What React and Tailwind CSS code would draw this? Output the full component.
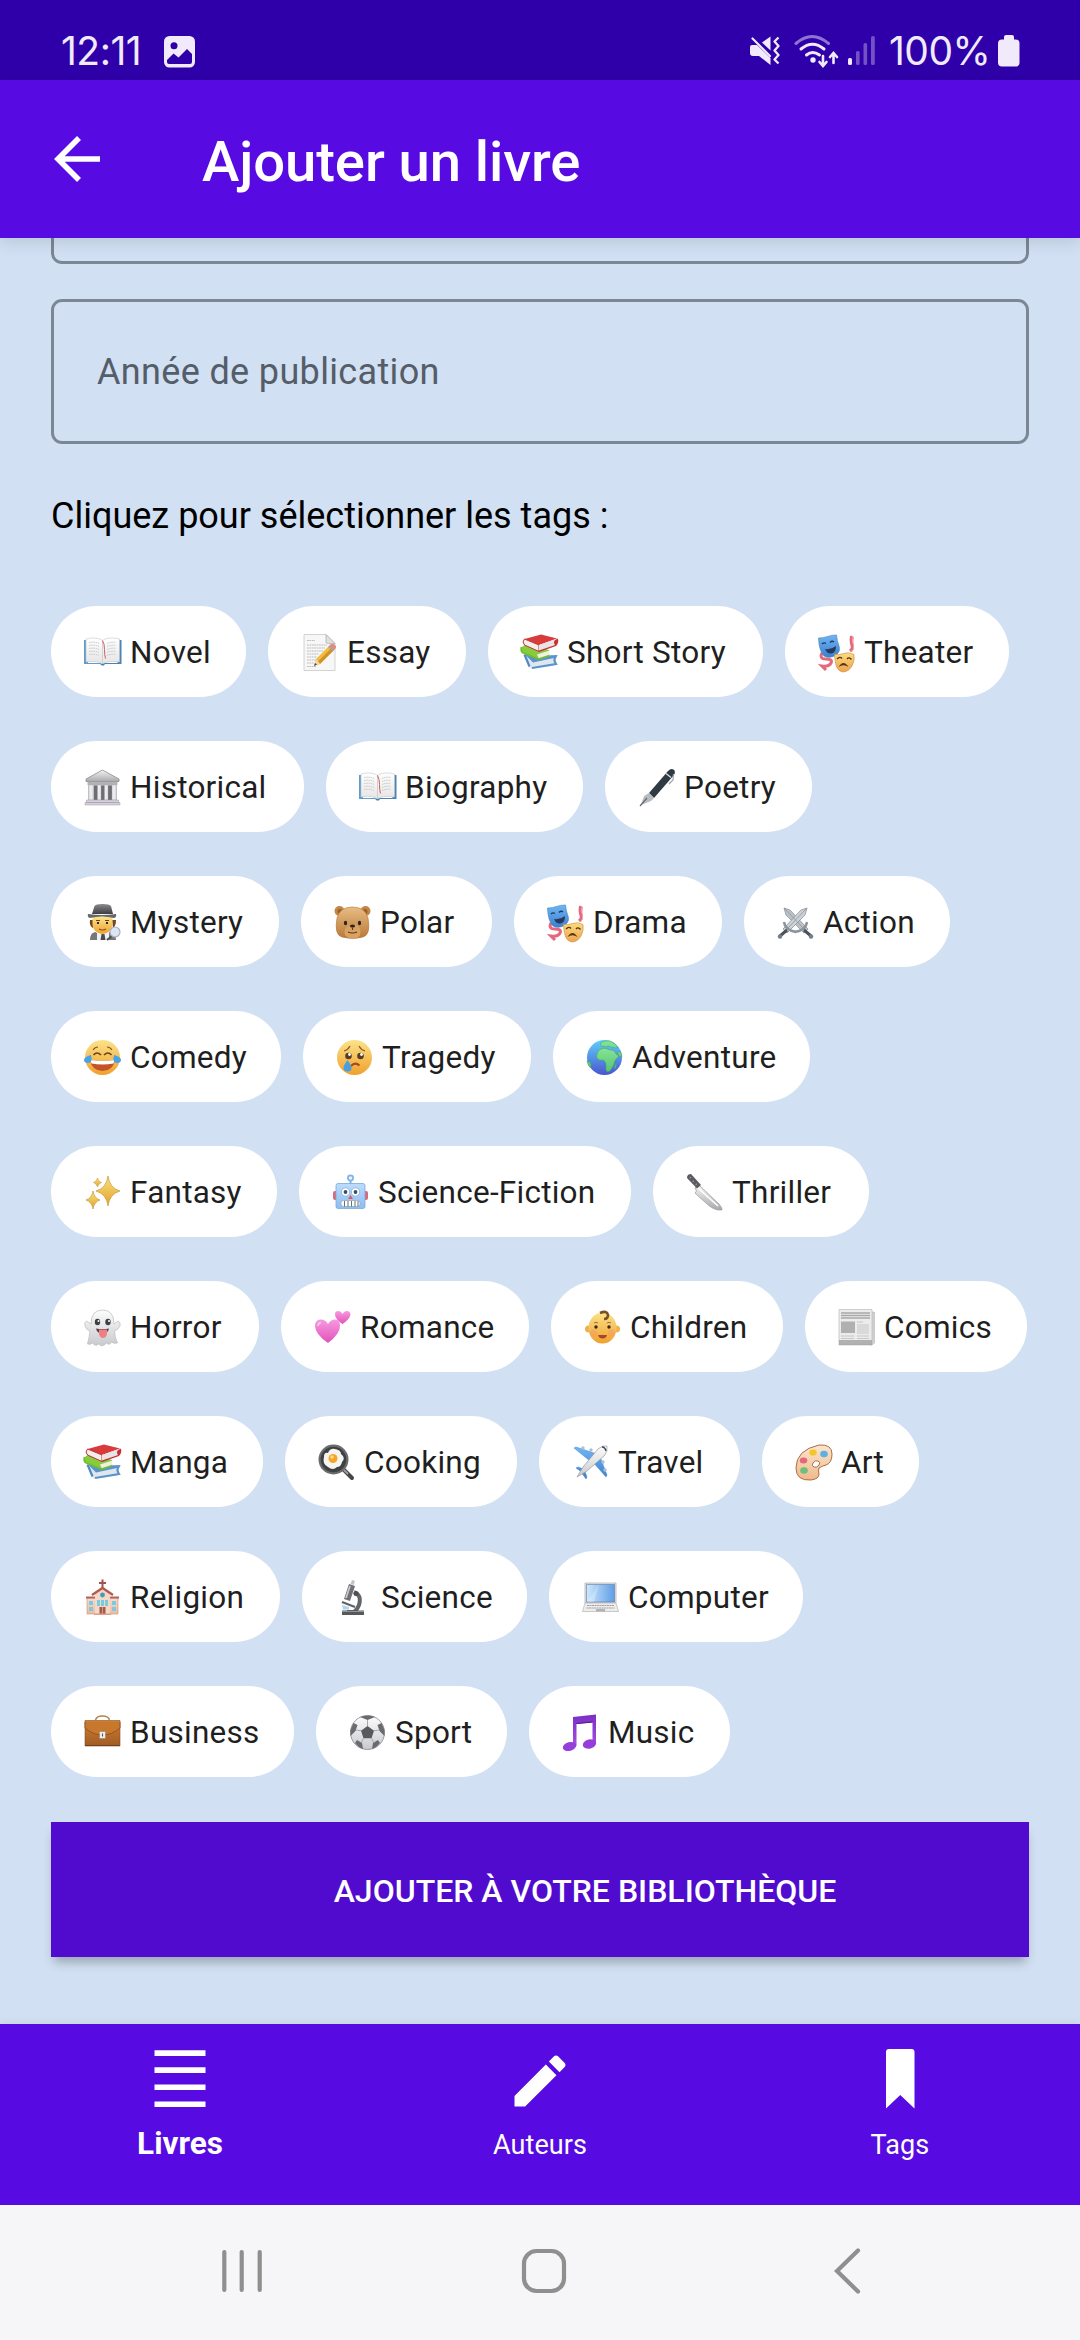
import React from "react";

/* Shared colour ramps used by the tag pictograms */
function Ramps() {
  const ramp = (id, a, b, horizontal) => (
    <linearGradient id={id} x1="0" y1="0" x2={horizontal ? "1" : "0"} y2={horizontal ? "0" : "1"}>
      <stop offset="0" stopColor={a} />
      <stop offset="1" stopColor={b} />
    </linearGradient>
  );
  return (
    <svg className="absolute h-0 w-0" aria-hidden="true">
      <defs>
        {ramp("face", "#fbe38a", "#f0a02c")}
        {ramp("grey", "#f4f4f4", "#a9a9ad")}
        {ramp("dark", "#8b8b8d", "#3e3e42")}
        {ramp("page", "#ffffff", "#e6e4e4")}
        {ramp("tan", "#e9bd83", "#b97838")}
        {ramp("brown", "#cf812f", "#a15a24")}
        {ramp("robot", "#bcdcfb", "#8dbdf3")}
        {ramp("ghost", "#fdfdfd", "#c9cacd")}
        {ramp("pink", "#f79ae0", "#e152bb")}
        {ramp("purple", "#7a2fc4", "#a64ee6")}
        {ramp("blue", "#6fb6f3", "#3d7fd0")}
        {ramp("sea", "#5fd0fa", "#4a55cf")}
        {ramp("land", "#83e594", "#58c274")}
        {ramp("screen", "#cfe8fb", "#5f9ee6", true)}
        {ramp("gold", "#fbe27a", "#e0a030")}
        {ramp("mask", "#fbdc7a", "#eda550")}
        {ramp("skin", "#fbe6cc", "#efb98c")}
        {ramp("wall", "#f6dccb", "#eebba3")}
      </defs>
    </svg>
  );
}

const OpenBook = () => (
  <>
    <path d="M1 7h4v23h14l1 2h-2l-1-1H1z" fill="#5f9ccb" />
    <path d="M38.500 7h-4v23H20l-1 2h2l1-1h16.500z" fill="#4a83b4" />
    <path d="M3 6c6-1.600 13-1.400 16.500 1.500V31C15 28 9 28 3 29z" fill="url(#page)" stroke="#c4c4c6" strokeWidth=".6" />
    <path d="M36.500 6c-6-1.600-13.500-1.400-17 1.500V31c4.500-3 11-3 17-2z" fill="url(#page)" stroke="#c4c4c6" strokeWidth=".6" />
    <path d="M6 9.500q6-1 10 1M6 12.500q6-1 10 1M6 15.500q6-1 10 1M6 18.500q6-1 10 1M6 21.500q6-1 10 1M24 10.500q5-2 9-1M24 13.500q5-2 9-1M24 16.500q5-2 9-1M24 19.500q5-2 9-1M24 22.500q5-2 9-1" fill="none" stroke="#bdbdbf" strokeWidth=".8" strokeDasharray="1.500 .7" />
    <path d="M19.500 7.500q2 3 2 9t1 9" fill="none" stroke="#c9605f" strokeWidth="1" />
    <path d="M18 30.500q1.500 1.500 3.500 0l-.5 2h-2.500z" fill="#3f7fb6" />
  </>
);

const Memo = () => (
  <>
    <path d="M4 1.500h22l9 9v27H4z" fill="#f7f7f7" stroke="#c9c9c9" strokeWidth=".8" />
    <path d="M26 1.500v8q0 1.500 9 1z" fill="#dfe0e1" stroke="#a9a9ab" strokeWidth=".7" />
    <path d="M7 7.500h8M7 12h20M7 15h18M7 18h16M7 21h12M7 24h10M7 27h9M7 30h7M7 33.500h9" stroke="#b5b5b5" strokeWidth=".9" strokeDasharray="1.800 .6" />
    <path d="M14 33l2-7L29 13l5 4-14 14z" fill="#f2bd3e" />
    <path d="M18 28.500L31.500 15l2.500 2-14 14z" fill="#d1922a" />
    <path d="M29 13l2-2q2-1 4 1t.5 3.500L34 17z" fill="#e28b86" />
    <path d="M28 14l1.500-1.500 5 4L33 18z" fill="#a4a4a8" />
    <path d="M14 33l2-7 4 5z" fill="#f1d6ae" />
    <path d="M14 33l1-3 2 1.500z" fill="#444" />
  </>
);

const Books = () => (
  <>
    <path d="M4 22l5 12q1 2 3 1.700l23-3.200V22z" fill="#dfe6ef" />
    <path d="M4.500 21.500l5 12" stroke="#4f8ac4" strokeWidth="2.200" />
    <path d="M5 21.500l8 8 21-4.500q3.500-1 3.500-3l-20 1z" fill="#5b93cb" />
    <path d="M36 23.500q-3 3 0 7.500l-24 4" fill="none" stroke="#5b93cb" strokeWidth="2.200" />
    <path d="M2 14l4-3 23 6q2 5-10 9Q2 20 1.500 18z" fill="#86cc3c" />
    <path d="M17 21.500l12.500-4q-1.500 3 .5 4.500l-11 4z" fill="#eef1e4" />
    <path d="M1.500 14q-1 5 2 6l15 6 11-3.500" fill="none" stroke="#72bd30" strokeWidth="1.800" />
    <path d="M4.500 6L21 1.500 37 5.500 19 12z" fill="#d93a3c" />
    <path d="M4.500 6q-3 3 0 6l14.500 6.500V12z" fill="#f3eeee" stroke="#c13033" strokeWidth="1" />
    <path d="M19 12l17-6v5.500L19 18z" fill="#e8e4e4" />
    <path d="M38 5.500l-3 1.500q-2 2.500 0 5L19 17.500v1.600L36 13q3-3 2-7.500z" fill="#c53235" />
  </>
);

const Masks = () => (
  <>
    <path d="M34.500 3q-1 6 .5 9t-2 6M5 20q-3 6 4 6t5 4-9 3l4 4" fill="none" stroke="#e5687c" strokeWidth="3" />
    <path d="M34.500 3l2 1q-1 6 0 9t-2 6" fill="none" stroke="#f2a0a8" strokeWidth="1" />
    <path d="M1.500 5q5 0 9-1.500T19.500 2q.5 6 2.500 11t-3 9q-6 4-12 1Q2 18 1.500 5z" fill="url(#blue)" stroke="#3d7fb8" strokeWidth=".6" />
    <path d="M5 11q2-2 4-.5M13 9.500q2-2.200 4-.5" fill="none" stroke="#1e3a5c" strokeWidth="1.300" />
    <path d="M8 16q6 1 11-3 0 7-4.500 7.500T8 16z" fill="#25395e" />
    <path d="M17.500 21q4 1.500 9-.5t10.500 1q1 6-2 11.500T26 39q-5.500-1-7-7t-1.500-11z" fill="url(#mask)" stroke="#c9863d" strokeWidth=".6" />
    <path d="M20 26q3-3 5-.5M30 26q2-2.500 4.500.5" fill="none" stroke="#57341c" strokeWidth="1.300" />
    <path d="M21.500 34q5-8 10 0-5-3.500-10 0z" fill="#57341c" />
  </>
);

const Temple = () => (
  <>
    <path d="M19.500 2L36 11v2.500H3V11z" fill="url(#grey)" stroke="#8d8d90" strokeWidth=".8" />
    <path d="M4.500 14h30v3h-30z" fill="#b3b3b6" />
    <path d="M5 17h29v16H5z" fill="#c8c8cc" />
    <path d="M11 17.500h4V32h-4zM18 17.500h4V32h-4zM25 17.500h4V32h-4z" fill="#6d6d72" />
    <path d="M6 17h4v15H6zM14.500 17h3.500v15h-3.500zM21.500 17h3.500v15h-3.500zM29 17h4v15h-4z" fill="#ececef" stroke="#aaa" strokeWidth=".4" />
    <path d="M3.500 32h32v2.500h-32zM2 34.500h35V37H2z" fill="#d5d0dc" stroke="#9d98a3" strokeWidth=".5" />
  </>
);

const Pen = () => (
  <>
    <path d="M31 3q3-3 5.500-1.500T37 7L17 30l-5-5z" fill="#303a42" />
    <path d="M36.500 6l-.5 6-4 4" fill="none" stroke="#9aa4ac" strokeWidth="1.200" />
    <path d="M29 5.500l5 4" stroke="#dfe4e8" strokeWidth="1.200" />
    <path d="M12 25l5 5-3 3-10 4 3-9z" fill="#b7bcc0" />
    <path d="M3 38l7-8" stroke="#63696e" strokeWidth="1.200" />
  </>
);

const Detective = () => (
  <>
    <path d="M7 37q0-7 5-8l7 3 8-3q6 1 6 8z" fill="#77777b" />
    <path d="M14 29l6 2 6-2v8H14z" fill="#f0f1f4" />
    <path d="M18.500 31h3l1 6h-5z" fill="#4b4b50" />
    <path d="M7 17q-1 6 3 8l1-8zM33 17q0 6-3 8l-1-8z" fill="#74471f" />
    <path d="M9.500 14h20v8q-1 8-10 9-9-1-10-9z" fill="url(#face)" />
    <path d="M13 17.500h4M22 17.500h4" stroke="#6b441c" strokeWidth="1.200" />
    <path d="M14 20h2M23 20h2" stroke="#33241a" strokeWidth="2" />
    <path d="M16 26q3.500 2 7 0" fill="none" stroke="#8c4a24" strokeWidth="1.200" />
    <path d="M9 11L11.500 3q1-2 8-2t8.500 2L30 11z" fill="url(#dark)" />
    <path d="M5 11q14 2 28 0 1 3-2 4-12-3-24 0-3-1-2-4z" fill="#66666b" />
    <path d="M29 33l-5 4" stroke="#4e4e52" strokeWidth="2" />
    <circle cx="32" cy="29" r="5" fill="#dbe6f5" stroke="#a9b1bf" strokeWidth="1.200" />
  </>
);

const Bear = () => (
  <>
    <circle cx="6.500" cy="8" r="5" fill="#c58643" />
    <circle cx="32.500" cy="8" r="5" fill="#c58643" />
    <circle cx="7" cy="8.500" r="2.500" fill="#9a602c" />
    <circle cx="32" cy="8.500" r="2.500" fill="#9a602c" />
    <path d="M19.500 4Q32 4 35 15q3 17-5 19-10 3-21 0-8-2-5-19Q7 4 19.500 4z" fill="url(#tan)" stroke="#b07337" strokeWidth=".6" />
    <path d="M19.500 21q8 1 8 8t-8 6.500-8-6.500 8-8z" fill="#d9a263" />
    <ellipse cx="12.500" cy="20" rx="1.600" ry="2.200" fill="#2e211a" />
    <ellipse cx="26.500" cy="20" rx="1.600" ry="2.200" fill="#2e211a" />
    <ellipse cx="19.500" cy="23" rx="2.600" ry="1.600" fill="#30211a" />
    <path d="M19.500 24.500V27M15 29q4.500 2 9 0" fill="none" stroke="#5e3818" strokeWidth="1.100" />
  </>
);

const Swords = () => (
  <>
    <path d="M8 5l6 2 18 19-4 4L10 12z" fill="#bcc3c8" stroke="#828a90" strokeWidth=".7" />
    <path d="M31 5l-6 2L7 26l4 4 18-18z" fill="#ccd2d6" stroke="#828a90" strokeWidth=".7" />
    <path d="M8 5l21 22M31 5L10 27" stroke="#929a9f" strokeWidth=".9" />
    <path d="M8 19q1 8 12 10M31 19q-1 8-12 10" fill="none" stroke="#8b949a" strokeWidth="2.500" />
    <path d="M11 27l-7 6M28 27l7 6" stroke="#4a535a" strokeWidth="3" />
    <circle cx="4" cy="33.500" r="2.200" fill="#747d83" />
    <circle cx="35" cy="33.500" r="2.200" fill="#747d83" />
  </>
);

const Laugh = () => (
  <>
    <circle cx="19.500" cy="19.500" r="17.500" fill="url(#face)" />
    <path d="M10 12q2-3 5-3M24 9q3 0 5 3" fill="none" stroke="#8a5a22" strokeWidth="1.100" />
    <path d="M10.500 17q3.500-4 7.500 0M21 17q4-4 7.500 0" fill="none" stroke="#70431c" strokeWidth="1.600" />
    <path d="M7 22q12.500 2 25 0-2 11-12.500 11T7 22z" fill="#c4532a" />
    <path d="M7.500 22q12 2 24 0l-1 3.500q-11 2-22 0z" fill="#fff" />
    <path d="M8 17q2 8-3 8-4 0-4-3 0-3 7-5zM31 17q-2 8 3 8 4 0 4-3 0-3-7-5z" fill="#46a4e6" />
  </>
);

const Cry = () => (
  <>
    <circle cx="19.500" cy="19.500" r="17.500" fill="url(#face)" />
    <path d="M9 13q4-1 6-5M24 8q2 4 6 5" fill="none" stroke="#8a5a22" strokeWidth="1.200" />
    <circle cx="13.500" cy="18" r="3.300" fill="#5a3c26" />
    <circle cx="25.500" cy="18" r="3.300" fill="#5a3c26" />
    <circle cx="14.500" cy="16.500" r="1.400" fill="#fff" />
    <circle cx="26.500" cy="16.500" r="1.400" fill="#fff" />
    <path d="M16 28q4-4.500 8.500-.5" fill="none" stroke="#a8481f" strokeWidth="2" />
    <path d="M12.500 22q4 5.500 4 8 0 3.500-4 3.500t-4-3.500q0-2.500 4-8z" fill="#459fe2" />
  </>
);

const Globe = () => (
  <>
    <circle cx="19.500" cy="19.500" r="17.500" fill="url(#sea)" />
    <path d="M15 11.500q3-2 6-1 3 1.500 8 2 1.500 4 5 5.500-2.500 2.500-4 4.500-1 5-3 7.500-1.500 3.500-4.500 4-2.500-2-1.500-6 0-5-3-6-5 1-6.500-3 0-5 3.500-7.500z" fill="url(#land)" stroke="#3d9c66" strokeWidth=".5" />
    <path d="M16 4.500q4-2.500 9-1.500 5 2 8 6.500-3 1-5-.5-2 1-4-1-4 1.500-6 0-4 1-2-3.500zM2 23q5 0 4 6-2 1.500-4-6zM32 14.500l3.500-1 1.500 5-2 .5z" fill="url(#land)" stroke="#3d9c66" strokeWidth=".5" />
    <path d="M29.500 28l2-3-.5 5-1.500 1z" fill="#4fb56a" />
  </>
);

const Sparkles = () => (
  <>
    <path d="M25 3q1.500 12 12 15-10.500 3-12 15-1.500-12-12-15 10.500-3 12-15z" fill="url(#gold)" stroke="#c99a38" strokeWidth=".7" />
    <path d="M10 18q1 7 7 9-6 2-7 9-1-7-7-9 6-2 7-9z" fill="url(#gold)" stroke="#c99a38" strokeWidth=".7" />
    <path d="M14.500 5q.7 3.500 4 4.500-3.300 1-4 4.500-.7-3.500-4-4.500 3.300-1 4-4.500z" fill="url(#gold)" stroke="#c99a38" strokeWidth=".6" />
  </>
);

const Robot = () => (
  <>
    <rect x="2" y="18" width="5" height="9" rx="2" fill="#d96a78" />
    <rect x="32" y="18" width="5" height="9" rx="2" fill="#d96a78" />
    <circle cx="19.500" cy="5" r="2.600" fill="#e7f3fe" stroke="#7fb2e8" strokeWidth="1.700" />
    <path d="M19.500 8v3" stroke="#7fb2e8" strokeWidth="2" />
    <rect x="5" y="10.500" width="29" height="25" rx="2" fill="url(#robot)" stroke="#7aa9dd" strokeWidth=".8" />
    <circle cx="14.500" cy="19" r="4.200" fill="#fff" stroke="#88acd2" strokeWidth=".8" />
    <circle cx="24.500" cy="19" r="4.200" fill="#fff" stroke="#88acd2" strokeWidth=".8" />
    <circle cx="14.500" cy="19" r="1.900" fill="#33506f" />
    <circle cx="24.500" cy="19" r="1.900" fill="#33506f" />
    <path d="M17 26l2.500-4 2.500 4z" fill="#db5a62" />
    <rect x="10" y="27.500" width="19" height="6" rx="2.500" fill="#fff" stroke="#8a97a6" strokeWidth=".6" />
    <path d="M13.500 28v5.500M17 28v5.500M20.500 28v5.500M24 28v5.500M27 28v5.500" stroke="#56606c" strokeWidth=".9" />
  </>
);

const Knife = () => (
  <>
    <path d="M10 15l4-3 20 19q3.500 4 3 6-8 1-16-7Q14 24 10 20l1.500-2z" fill="url(#grey)" stroke="#96989c" strokeWidth=".7" />
    <path d="M13 15l20 18" stroke="#fff" strokeWidth="1.600" />
    <path d="M2 5q0-4 4-4l10 11-4 3.500z" fill="#5b5b60" />
    <path d="M5 4.500l.5.5M8 8l.5.5M11 11l.5.5" stroke="#c9c9cc" strokeWidth="1.500" />
  </>
);

const Ghost = () => (
  <>
    <path d="M19.500 2Q31 2 31 16l4-3q3 1 2 5-2 4-5.500 5 0 6 3 12-4 1-6-1-2 4-5 1-4 5-8 1-3 3-6-1-2 2-5 1 2-8 2.500-13Q3 22 2 18q-1-4 1.500-5L8 16Q8 2 19.500 2z" fill="url(#ghost)" stroke="#b9babd" strokeWidth=".7" />
    <ellipse cx="14.500" cy="14" rx="2.700" ry="3.200" fill="#3f4045" />
    <ellipse cx="25" cy="14" rx="2.700" ry="3.200" fill="#3f4045" />
    <circle cx="15.500" cy="13" r="1" fill="#fff" />
    <circle cx="26" cy="13" r="1" fill="#fff" />
    <path d="M13 20.500q6.500 1 13 0-1 5-6.500 5t-6.500-5z" fill="#5b4146" />
    <path d="M16 21.500h8V26q-1 4-4 4t-4-4z" fill="#ee7f83" />
  </>
);

const Hearts = () => (
  <>
    <path d="M15 35Q2 26 2 18q0-6 5.500-6.500Q12 11 15 16q3-5 7.500-4.500Q27 12 27 18q0 8-12 17z" fill="url(#pink)" />
    <path d="M29.500 16q-7.500-5-7.500-9.500Q22 3 25 3t4.500 3Q31 3 34 3t3.500 3.500Q37 11 29.500 16z" fill="url(#pink)" />
    <path d="M5 18q0-3 3-3.500" fill="none" stroke="#fcc9f0" strokeWidth="1.500" />
  </>
);

const Baby = () => (
  <>
    <circle cx="5.500" cy="21" r="3.500" fill="#efb14d" />
    <circle cx="33.500" cy="21" r="3.500" fill="#efb14d" />
    <ellipse cx="19.500" cy="20" rx="14" ry="15.500" fill="url(#face)" />
    <circle cx="10.500" cy="25" r="3.500" fill="#f49a66" opacity=".5" />
    <circle cx="28.500" cy="25" r="3.500" fill="#f49a66" opacity=".5" />
    <path d="M17 5q7-3 8 2 0 4-4 4" fill="none" stroke="#7a5023" strokeWidth="2.600" />
    <circle cx="13" cy="19" r="1.700" fill="#3a2719" />
    <circle cx="26" cy="19" r="1.700" fill="#3a2719" />
    <path d="M11 15q2-1.500 4 0M24 15q2-1.500 4 0" fill="none" stroke="#a06d2e" strokeWidth="1" />
    <path d="M15 27h9q-1 3.500-4.500 3.500T15 27z" fill="#a8452c" />
  </>
);

const Newspaper = () => (
  <>
    <path d="M33 4h4.500v31l-2.500 2h-2z" fill="#cfcfcf" stroke="#aeaeae" strokeWidth=".5" />
    <path d="M2 1.500h33V37H2z" fill="#ececec" stroke="#bcbcbc" strokeWidth=".7" />
    <path d="M4 5h29M4 7.500h29M4 10h29" stroke="#a8a8a8" strokeWidth="1.300" />
    <path d="M4 13.500h14V25H4z" fill="#b0b0b0" />
    <path d="M20 14h6M20 17h12M20 19h12M20 21h12M20 23h12M20 25h12M4 28h13M20 28h12M4 30.500h13M20 30.500h12" stroke="#c4c4c4" strokeWidth=".9" />
    <path d="M2 32h33v5H2z" fill="#999" opacity=".7" />
  </>
);

const Cooking = () => (
  <>
    <path d="M27 27l8 8" stroke="#44474a" strokeWidth="4" strokeLinecap="round" />
    <path d="M26 26l5 5" stroke="#9da0a2" strokeWidth="1.800" />
    <circle cx="16.500" cy="16.500" r="15" fill="#6a6b6d" />
    <circle cx="16.500" cy="16.500" r="12.800" fill="#3f4042" />
    <path d="M7 14q0-5 4-4 2-5 7-4 6 1 6 5 5 4 1 8-1 5-5 5-4 4-9 0-6-3-4-10z" fill="#f7f5f2" />
    <circle cx="16" cy="15.500" r="4.500" fill="#f4a52a" />
    <circle cx="15" cy="14" r="1.800" fill="#fbdd80" />
  </>
);

const Plane = () => (
  <>
    <path d="M3 5l2-1 21 7-7 7zM35 34l1-2-8-21-7 7zM5 25l2-1 8 3-3 3zM15 36l1-2-3-8-3 3z" fill="url(#blue)" stroke="#4c86c8" strokeWidth=".5" />
    <circle cx="12" cy="5" r="1.700" fill="#a9bfd8" />
    <circle cx="20" cy="7" r="1.700" fill="#a9bfd8" />
    <circle cx="34" cy="27" r="1.700" fill="#a9bfd8" />
    <circle cx="32" cy="19" r="1.700" fill="#a9bfd8" />
    <path d="M36 3q1 6-3 10L16 28 6 34l6-10L27 6q4-4 9-3z" fill="url(#ghost)" stroke="#97999d" strokeWidth=".7" />
    <path d="M31 4q3 0 4 4" fill="none" stroke="#3d4148" strokeWidth="1.400" />
  </>
);

const Palette = () => (
  <>
    <path d="M25 2q13-1 13 9 0 9-6 11-4 1-7 3-1 3 0 6 0 5-8 6Q2 38 2 25 2 7 25 2zM24 18q-3-1-5 2t1 4q3 1 5-2t-1-4z" fill="url(#skin)" stroke="#ad6d43" strokeWidth="1" fillRule="evenodd" />
    <ellipse cx="19" cy="9.500" rx="3.800" ry="3.100" fill="#f4c62e" />
    <ellipse cx="30" cy="11" rx="3.800" ry="3.300" fill="#5cb0e4" />
    <ellipse cx="9.500" cy="17.500" rx="3.800" ry="3" fill="#e4677b" />
    <ellipse cx="10" cy="27.500" rx="3.800" ry="3.200" fill="#6cc07a" />
  </>
);

const Church = () => (
  <>
    <path d="M19.500 1.500V11M16 5h7" stroke="#a05450" strokeWidth="2" />
    <path d="M4 20h31v16H4z" fill="url(#wall)" stroke="#c98d74" strokeWidth=".6" />
    <path d="M12 16l7.500-6 7.500 6v20H12z" fill="#f5d8c8" />
    <path d="M9 17l10.500-7L30 17" fill="none" stroke="#b35a53" strokeWidth="2.300" />
    <path d="M3 19.500h9M27 19.500h9" stroke="#b9625a" strokeWidth="2.200" />
    <circle cx="19.500" cy="17" r="2.400" fill="#3fa0b8" />
    <path d="M6 23h4v4H6zM6 29h4v4H6zM29 23h4v4h-4zM29 29h4v4h-4zM14 22h3v6h-3zM18 22h3v6h-3zM22 22h3v6h-3z" fill="#79cbe0" />
    <path d="M16.500 29h6v7h-6z" fill="#a45c46" />
    <path d="M19.500 29v7" stroke="#e2ac92" strokeWidth=".8" />
    <path d="M11 35.500h17V37H11z" fill="#dca08b" />
  </>
);

const Microscope = () => (
  <>
    <path d="M18 2l3 1-1.500 4-3-1z" fill="#c2c4c6" />
    <path d="M15 6l6 2-5 15-6-2z" fill="#6f7174" />
    <path d="M16 8l-4 12" stroke="#c6c8ca" strokeWidth="1.800" />
    <path d="M20 14q8 3 5 13-2 5-5 7h-7" fill="none" stroke="#636568" strokeWidth="4" />
    <circle cx="22" cy="15.500" r="2.500" fill="#4e5053" />
    <path d="M8 24l13 5" stroke="#606265" strokeWidth="2.200" />
    <path d="M8 27l7 2v2.500H9z" fill="#b0d4e8" />
    <path d="M8 32.500h22V37H8z" fill="#56585b" />
    <path d="M8 33.500h22" stroke="#929497" strokeWidth="1" />
  </>
);

const Laptop = () => (
  <>
    <path d="M4 5h31v20H4z" fill="#e4e4e6" stroke="#acacaf" strokeWidth=".7" />
    <path d="M5.500 6.500h28V24h-28z" fill="url(#screen)" stroke="#5a7ba3" strokeWidth=".6" />
    <path d="M18 6.500L6 24h7z" fill="#fff" opacity=".25" />
    <path d="M4 25h31l2.500 8.500h-36z" fill="#ededee" stroke="#a9a9ab" strokeWidth=".6" />
    <path d="M6 27.500h27M5.500 30h28" stroke="#a3a3a6" strokeWidth="1" strokeDasharray="2 .5" />
    <path d="M15 31h9v2.500h-9z" fill="#b3b3b6" />
  </>
);

const Briefcase = () => (
  <>
    <path d="M12.500 7q1-4 7-4t7 4" fill="none" stroke="#b58352" strokeWidth="1.500" />
    <path d="M2 7.500h35V33H2z" fill="url(#brown)" stroke="#8c4d1e" strokeWidth=".6" />
    <path d="M2 9v6q8 7 17.500 7T37 15V9" fill="#c8782c" stroke="#8f5122" strokeWidth=".9" />
    <path d="M2 32.500h35" stroke="#75401b" strokeWidth="1.200" />
    <rect x="16.500" y="18.500" width="6" height="7" rx=".8" fill="#eee" stroke="#96816c" strokeWidth=".6" />
    <path d="M19.500 20.500v3" stroke="#555" strokeWidth="1.100" />
  </>
);

const Ball = () => (
  <>
    <circle cx="19.500" cy="19.500" r="17" fill="url(#ghost)" stroke="#88858b" strokeWidth=".8" />
    <path d="M19.500 13l6.500 4.700-2.500 7.600h-8L13 17.700z" fill="#58595c" />
    <path d="M12 4l7.500 3L27 4q-7-3-15 0zM2.500 17l3-7 4 2-2 6-5 5zM36.500 17l-3-7-4 2 2 6 5 5zM7 30l2-3 5 3 1 6q-5-2-8-6zM32 30l-2-3-5 3-1 6q5-2 8-6z" fill="#6b6a6f" />
    <path d="M19.500 7v6M26 17.700l5.500-.7M23.500 25.300L26 30M15.500 25.300L13 30M13 17.700L7.500 17" stroke="#99979c" strokeWidth=".8" />
  </>
);

const Notes = () => (
  <>
    <path d="M12 4l23-2.500V30h-3.500V9.500L15.500 11v22H12z" fill="url(#purple)" />
    <ellipse cx="8.500" cy="33.500" rx="6.800" ry="4.400" transform="rotate(-14 8.500 33.500)" fill="#963fd8" />
    <ellipse cx="28.500" cy="31" rx="6.800" ry="4.600" transform="rotate(-14 28.500 31)" fill="#963fd8" />
    <path d="M15.500 10.500l16-1.500" stroke="#4d1a8c" strokeWidth="1" />
  </>
);

const TAGS = [
  ["Novel", OpenBook, "w-[195px]"],
  ["Essay", Memo, "w-[198px]"],
  ["Short Story", Books, "w-[275px]"],
  ["Theater", Masks, "w-[224px]"],
  ["Historical", Temple, "w-[253px]"],
  ["Biography", OpenBook, "w-[257px]"],
  ["Poetry", Pen, "w-[207px]"],
  ["Mystery", Detective, "w-[228px]"],
  ["Polar", Bear, "w-[191px]"],
  ["Drama", Masks, "w-[208px]"],
  ["Action", Swords, "w-[206px]"],
  ["Comedy", Laugh, "w-[230px]"],
  ["Tragedy", Cry, "w-[228px]"],
  ["Adventure", Globe, "w-[257px]"],
  ["Fantasy", Sparkles, "w-[226px]"],
  ["Science-Fiction", Robot, "w-[332px]"],
  ["Thriller", Knife, "w-[216px]"],
  ["Horror", Ghost, "w-[208px]"],
  ["Romance", Hearts, "w-[248px]"],
  ["Children", Baby, "w-[232px]"],
  ["Comics", Newspaper, "w-[222px]"],
  ["Manga", Books, "w-[212px]"],
  ["Cooking", Cooking, "w-[232px]"],
  ["Travel", Plane, "w-[201px]"],
  ["Art", Palette, "w-[157px]"],
  ["Religion", Church, "w-[229px]"],
  ["Science", Microscope, "w-[225px]"],
  ["Computer", Laptop, "w-[254px]"],
  ["Business", Briefcase, "w-[243px]"],
  ["Sport", Ball, "w-[191px]"],
  ["Music", Notes, "w-[201px]"],
];

function Chip({ label, Art, width }) {
  return (
    <button className={"flex h-[91px] items-center rounded-full bg-white pl-8 " + width}>
      <svg viewBox="0 0 40 40" className="mt-[2px] h-10 w-10 shrink-0">
        <Art />
      </svg>
      <span className="mt-[3px] ml-[7px] text-[31.500px] leading-none tracking-[0.25px] whitespace-nowrap text-[#1f1f1f]">
        {label}
      </span>
    </button>
  );
}

function StatusBar() {
  return (
    <div className="flex h-20 items-start bg-[#2f00a9] pt-[31px] pr-[60px] pl-[61px] text-[#f0eafa]">
      <span className="w-[103px] font-[Inter] text-[39px] leading-[40px] font-normal tracking-[-0.5px]">12:11</span>
      <svg viewBox="0 0 31 32" className="mt-[5px] h-8 w-[31px]">
        <rect width="31" height="31.500" rx="5.500" fill="currentColor" />
        <circle cx="10" cy="9.800" r="3.500" fill="#2f00a9" />
        <path d="M3 24l6.500-6.500 5 4L23 13l5 5v8q0 2-2 2H5q-2 0-2-2z" fill="#2f00a9" />
      </svg>
      <div className="ml-auto flex items-start">
        <svg viewBox="0 0 30 30" className="mt-[5px] h-[30px] w-[30px]" fill="none" stroke="currentColor">
          <path d="M0 11q0-2 2-2h5L20.500 22v7L9 20H3q-3 0-3-3zM12 6.500l8.500-6v14z" fill="currentColor" stroke="none" />
          <path d="M2.500 2.500L20 20" strokeWidth="2.200" strokeLinecap="round" />
          <path d="M28.500 1.500l-4 4 4 4.500-4 4.500 4 4.500-4 4.500 4 4" strokeWidth="2.300" strokeLinejoin="round" />
        </svg>
        <svg viewBox="0 0 46 34" className="mt-[3px] ml-[13px] h-[34px] w-[46px]" fill="none" stroke="currentColor" strokeLinecap="round">
          <path d="M3 9.500q16-14 32.500 0" strokeWidth="3" opacity=".5" />
          <path d="M8 15q11.500-9.500 23 0" strokeWidth="3" />
          <path d="M13.500 21q6-5 13 0" strokeWidth="3" />
          <circle cx="20" cy="26" r="2.700" fill="currentColor" stroke="none" />
          <path d="M30 22v9M26.500 28l3.500 4 3.500-4M40.500 29V19.500M37 23l3.500-4 3.500 4" strokeWidth="2.600" />
        </svg>
        <svg viewBox="0 0 28 30" className="mt-[5px] ml-[9px] h-[30px] w-7" fill="currentColor">
          <rect x="0" y="22" width="4" height="7" rx="1.500" />
          <rect x="8" y="15" width="3.600" height="14" rx="1.500" opacity=".35" />
          <rect x="15.500" y="7" width="3.600" height="22" rx="1.500" opacity=".35" />
          <rect x="23" y="0" width="3.800" height="29" rx="1.500" opacity=".35" />
        </svg>
        <span className="ml-[13px] w-[109px] font-[Inter] text-[39px] leading-[40px] font-normal tracking-[-0.5px]">100%</span>
        <svg viewBox="0 0 22 32" className="mt-1 h-8 w-[22px]" fill="currentColor">
          <rect x="6" y="0" width="10" height="8" rx="2" />
          <rect x="0" y="4.500" width="21.500" height="27" rx="4" />
        </svg>
      </div>
    </div>
  );
}

export default function App() {
  return (
    <div className="flex h-[2340px] w-[1080px] flex-col overflow-hidden bg-[#d1e0f3] font-[Roboto,sans-serif]">
      <Ramps />
      <StatusBar />
      <header className="z-10 flex h-[158px] items-center bg-[#570be2] pl-[54px] text-white shadow-[0_4px_16px_rgba(0,0,0,0.12)]">
        <svg viewBox="0 0 46 46" className="h-[46px] w-[46px]" fill="none" stroke="currentColor" strokeWidth="5.600">
          <path d="M46 23H5M25 2L4 23l21 21" />
        </svg>
        <h1 className="mt-[7px] ml-[102px] text-[56.250px] leading-none font-medium tracking-[-0.1px]">Ajouter un livre</h1>
      </header>

      <main className="flex h-[1786px] flex-col px-[51px]">
        <div className="h-[26px] rounded-b-[11px] border-[3px] border-t-0 border-[#7b8794]" />
        <div className="mt-[35px] flex h-[145px] items-center rounded-[11px] border-[3px] border-[#7b8794] pl-[43px] text-[36px] tracking-[0.35px] text-[#545d68]">
          Année de publication
        </div>
        <p className="mt-[51px] text-[36px] leading-[42px] text-black">
          Cliquez pour sélectionner les tags :
        </p>
        <div className="mt-[69px] flex flex-wrap gap-x-[22px] gap-y-[44px]">
          {TAGS.map(([label, Art, width]) => (
            <Chip key={label} label={label} Art={Art} width={width} />
          ))}
        </div>
        <button className="mt-[45px] flex h-[135px] shrink-0 items-center justify-center bg-[#500bce] pt-[2px] pl-[90px] text-[32px] font-medium text-white shadow-[0_8px_10px_-3px_rgba(0,0,0,0.28)]">
          AJOUTER À VOTRE BIBLIOTHÈQUE
        </button>
      </main>

      <nav className="z-10 grid h-[181px] shrink-0 grid-cols-3 bg-[#570be2] text-white shadow-[0_0_10px_rgba(0,0,0,0.08)]">
        <div className="flex flex-col items-center pt-[23px]">
          <svg viewBox="0 0 68 68" className="h-[68px] w-[68px]" fill="currentColor">
            <path d="M8.500 3.300h51v5.600h-51zM8.500 20.300h51v5.600h-51zM8.500 37.400h51V43h-51zM8.500 54.400h51V60h-51z" />
          </svg>
          <span className="mt-[13px] text-[31.500px] leading-[32px] font-bold">Livres</span>
        </div>
        <div className="flex flex-col items-center pt-[23px]">
          <svg viewBox="0 0 24 24" className="h-[68px] w-[68px]" fill="currentColor">
            <path d="M3 17.250V21h3.750L17.810 9.940l-3.750-3.750L3 17.250zM20.710 7.040c.39-.39.39-1.020 0-1.410l-2.340-2.340c-.39-.39-1.020-.39-1.410 0l-1.830 1.830 3.750 3.750 1.830-1.830z" />
          </svg>
          <span className="mt-[14px] text-[27px] leading-[32px] tracking-[0.1px]">Auteurs</span>
        </div>
        <div className="flex flex-col items-center pt-[23px]">
          <svg viewBox="0 0 68 68" className="h-[68px] w-[68px]" fill="currentColor">
            <path d="M20 5q0-3 3-3h22.500q3 0 3 3v56.500L34.250 48 20 61.500z" />
          </svg>
          <span className="mt-[14px] text-[27px] leading-[32px] tracking-[0.1px]">Tags</span>
        </div>
      </nav>

      <footer className="z-10 flex h-[135px] shrink-0 items-start bg-[#f6f6f8] pt-[43px] pl-[221px]">
        <svg viewBox="0 0 42 46" className="h-[46px] w-[42px]" stroke="#8f8f8f" strokeWidth="4.200" strokeLinecap="round">
          <path d="M3.300 4v38M20.700 4v38M38.700 4v38" />
        </svg>
        <svg viewBox="0 0 46 46" className="ml-[258px] h-[46px] w-[46px]" fill="none" stroke="#8f8f8f" strokeWidth="4.200">
          <rect x="3" y="3" width="40" height="40" rx="12.500" />
        </svg>
        <svg viewBox="0 0 28 46" className="ml-[266px] h-[46px] w-7" fill="none" stroke="#8f8f8f" strokeWidth="4.200" strokeLinecap="round">
          <path d="M25 2.500L4 23l21 20.500" />
        </svg>
      </footer>
    </div>
  );
}
